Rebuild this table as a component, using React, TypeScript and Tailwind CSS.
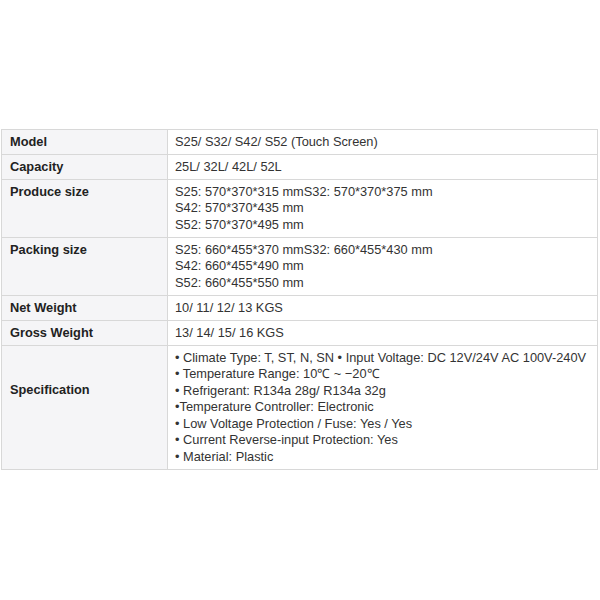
import React from "react";

type Row = { label: string; lines: string[]; labelPad?: string };

const rows: Row[] = [
  { label: "Model", lines: ["S25/ S32/ S42/ S52 (Touch Screen)"] },
  { label: "Capacity", lines: ["25L/ 32L/ 42L/ 52L"] },
  {
    label: "Produce size",
    lines: ["S25: 570*370*315 mmS32: 570*370*375 mm", "S42: 570*370*435 mm", "S52: 570*370*495 mm"],
  },
  {
    label: "Packing size",
    lines: ["S25: 660*455*370 mmS32: 660*455*430 mm", "S42: 660*455*490 mm", "S52: 660*455*550 mm"],
  },
  { label: "Net Weight", lines: ["10/ 11/ 12/ 13 KGS"] },
  { label: "Gross Weight", lines: ["13/ 14/ 15/ 16 KGS"] },
  {
    label: "Specification",
    labelPad: "pt-[36px]",
    lines: [
      "• Climate Type: T, ST, N, SN • Input Voltage: DC 12V/24V AC 100V-240V",
      "• Temperature Range: 10℃ ~ −20℃",
      "• Refrigerant: R134a 28g/ R134a 32g",
      "•Temperature Controller: Electronic",
      "• Low Voltage Protection / Fuse: Yes / Yes",
      "• Current Reverse-input Protection: Yes",
      "• Material: Plastic",
    ],
  },
];

export default function App() {
  return (
    <div
      className="w-[600px] h-[600px] bg-white pt-[129px] pl-[1px]"
      style={{ fontFamily: '"Liberation Sans", Arial, sans-serif' }}
    >
      <table className="w-[597px] table-fixed border-collapse text-[12.8px] leading-[16.5px] text-[#333333]">
        <colgroup>
          <col className="w-[166px]" />
          <col />
        </colgroup>
        <tbody>
          {rows.map((r) => (
            <tr key={r.label}>
              <td
                className={
                  "border border-[#d8d8d8] bg-[#f5f5f7] px-[8px] align-top font-bold text-[#222222] " +
                  (r.labelPad ? r.labelPad + " pb-[3.75px]" : "py-[3.75px]")
                }
              >
                {r.label}
              </td>
              <td className="border border-[#d8d8d8] pl-[7px] pr-[8px] py-[3.75px] align-top">
                {r.lines.map((l, i) => (
                  <div key={i} className="whitespace-nowrap">
                    {l}
                  </div>
                ))}
              </td>
            </tr>
          ))}
        </tbody>
      </table>
    </div>
  );
}
